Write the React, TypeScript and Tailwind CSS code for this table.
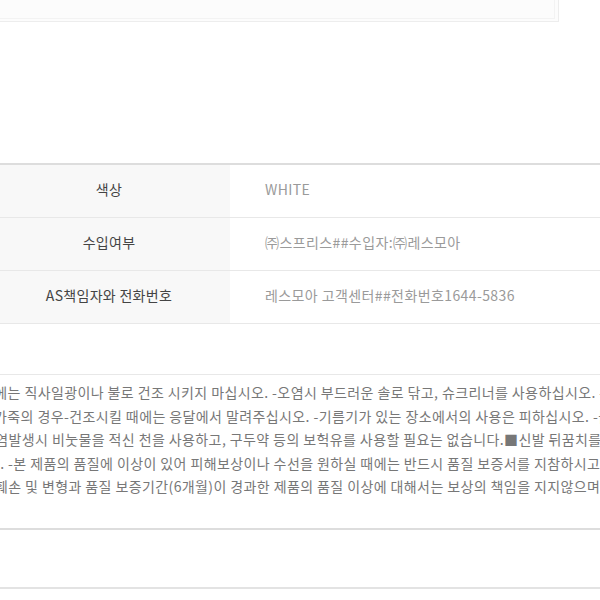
const rows = [
  { label: "색상", value: "WHITE" },
  { label: "수입여부", value: "㈜스프리스##수입자:㈜레스모아" },
  { label: "AS책임자와 전화번호", value: "레스모아 고객센터##전화번호1644-5836" },
];

const careLines = [
  { text: "때에는 직사일광이나 불로 건조 시키지 마십시오. -오염시 부드러운 솔로 닦고, 슈크리너를 사용하십시오. -가죽", offset: "-ml-[19px]" },
  { text: "가죽의 경우-건조시킬 때에는 응달에서 말려주십시오. -기름기가 있는 장소에서의 사용은 피하십시오. -불", offset: "-ml-[6px]" },
  { text: "오염발생시 비눗물을 적신 천을 사용하고, 구두약 등의 보헉유를 사용할 필요는 없습니다.■신발 뒤꿈치를", offset: "-ml-[18px]" },
  { text: "요. -본 제품의 품질에 이상이 있어 피해보상이나 수선을 원하실 때에는 반드시 품질 보증서를 지참하시고 -", offset: "-ml-[13px]" },
  { text: "훼손 및 변형과 품질 보증기간(6개월)이 경과한 제품의 품질 이상에 대해서는 보상의 책임을 지지않으며", offset: "-ml-[5px]" },
];

export default function App() {
  return (
    <div className="h-[600px] w-[600px] overflow-hidden bg-white font-['Malgun_Gothic','Noto_Sans_CJK_KR',sans-serif]">
      <div className="h-[22px] w-[559px] border-b border-r border-[#ededed] bg-[#fcfcfc] pb-[2px] pr-[3px]">
        <div className="h-full border-b border-r border-[#f3f3f3]" />
      </div>

      <div className="mt-[141px] border-t-2 border-[#dddddd]">
        {rows.map((row) => (
          <div key={row.label} className="flex h-[53px] border-b border-[#e8e8e8]">
            <div className="flex w-[230px] shrink-0 items-center justify-center bg-[#f8f8f8] pb-[3px] pr-[12px] text-[14px] tracking-[0.3px] text-[#444]">
              {row.label}
            </div>
            <div className="flex flex-1 items-center pb-[3px] pl-[35px] text-[14px] tracking-[0.4px] text-[#9a9a9a]">
              {row.value}
            </div>
          </div>
        ))}
      </div>

      <div className="mt-[50px] border-t border-[#e8e8e8]">
        <div className="flex flex-col pb-[29px] pt-[6px] text-[14px] leading-[23.5px] tracking-[0.4px] text-[#777]">
          {careLines.map((line) => (
            <div key={line.text} className={`whitespace-nowrap ${line.offset}`}>
              {line.text}
            </div>
          ))}
        </div>
      </div>
      <div className="border-t-2 border-[#dddddd]" />
      <div className="mt-[57px] border-t-2 border-[#e3e3e3]" />
    </div>
  );
}
